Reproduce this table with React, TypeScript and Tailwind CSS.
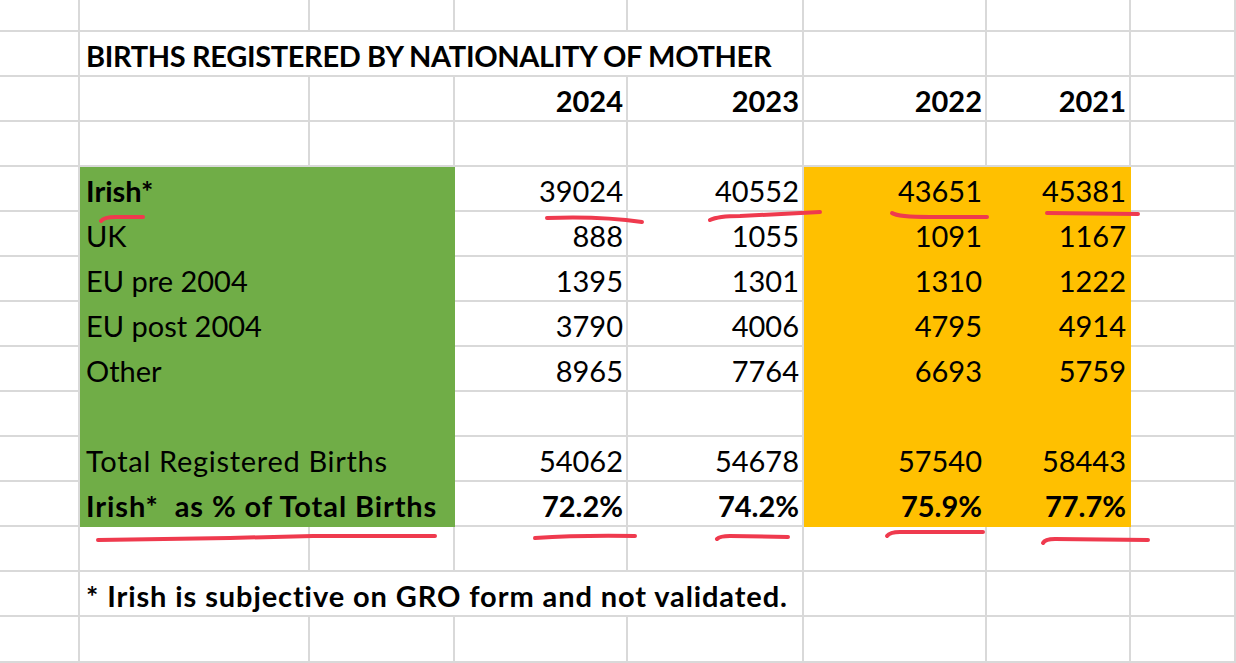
import React from "react";

const GRID = "border-[#d9d9d9]";
const GREEN = "bg-[#70ad47] border-[#70ad47]";
const ORANGE = "bg-[#ffc000] border-[#ffc000]";

type Row = {
  label?: string;
  labelBold?: boolean;
  numBold?: boolean;
  track?: string;
  values?: string[];
};

const rows: Row[] = [
  { label: "Irish*", labelBold: true, values: ["39024", "40552", "43651", "45381"] },
  { label: "UK", values: ["888", "1055", "1091", "1167"] },
  { label: "EU pre 2004", values: ["1395", "1301", "1310", "1222"] },
  { label: "EU post 2004", values: ["3790", "4006", "4795", "4914"] },
  { label: "Other", values: ["8965", "7764", "6693", "5759"] },
  {},
  { label: "Total Registered Births", track: "tracking-[0.7px]", values: ["54062", "54678", "57540", "58443"] },
  {
    label: "Irish*  as % of Total Births",
    labelBold: true,
    numBold: true,
    track: "tracking-[0.9px]",
    values: ["72.2%", "74.2%", "75.9%", "77.7%"],
  },
];

const years = ["2024", "2023", "2022", "2021"];

// plain spreadsheet cell, gridline on right + bottom
const Cell = ({
  className = "",
  tone = GRID,
  children,
}: {
  className?: string;
  tone?: string;
  children?: React.ReactNode;
}) => (
  <div className={`h-[45px] border-r-2 border-b-2 ${tone} flex items-end whitespace-pre pb-[5px] ${className}`}>
    {children}
  </div>
);

const EmptyRow = ({ h = "h-[45px]" }: { h?: string }) => (
  <>
    {Array.from({ length: 8 }).map((_, i) => (
      <div key={i} className={`${h} border-r-2 border-b-2 ${GRID}`} />
    ))}
  </>
);

// red pen marks drawn over the sheet
const PenMarks = () => (
  <svg className="absolute inset-0 pointer-events-none" width="1236" height="663" viewBox="0 0 1236 663">
    <g fill="none" stroke="#ef3a4e" strokeWidth="4" strokeLinecap="round" strokeLinejoin="round">
      <path d="M101 221 Q104 217 116 217 L143 217" />
      <path d="M547 218 Q600 216 642 222" />
      <path d="M710 220 Q718 216 740 216 L820 212" />
      <path d="M892 213 Q898 217 930 217 L987 217" />
      <path d="M1047 213 L1138 214" />
      <path d="M98 540 L230 538 L313 536 L435 536" />
      <path d="M535 538 Q580 535 635 536" />
      <path d="M717 539 Q720 536 730 536 L788 537" />
      <path d="M887 536 Q890 532 900 532 L983 532" />
      <path d="M1043 543 Q1045 539 1055 539 L1148 540" />
    </g>
  </svg>
);

export default function App() {
  return (
    <div className="relative w-[1236px] h-[663px] overflow-hidden bg-white text-black text-[29px] leading-none font-['Lato',sans-serif]">
      <div className="grid grid-cols-[80px_230px_145px_173px_176px_183px_144px_105px]">
        <EmptyRow h="h-[32px]" />

        {/* title */}
        <Cell />
        <Cell className="col-span-4 pl-[6px] font-bold tracking-[-0.35px]">BIRTHS REGISTERED BY NATIONALITY OF MOTHER</Cell>
        <Cell />
        <Cell />
        <Cell />

        {/* years */}
        <Cell />
        <Cell />
        <Cell />
        {years.map((y) => (
          <Cell key={y} className="justify-end pr-[3px] font-bold">
            {y}
          </Cell>
        ))}
        <Cell />

        <EmptyRow />

        {rows.map((r, i) => (
          <React.Fragment key={i}>
            <Cell />
            <Cell tone={GREEN} className={`col-span-2 pl-[6px] ${r.labelBold ? "font-bold" : ""} ${r.track ?? ""}`}>
              {r.label}
            </Cell>
            {[0, 1, 2, 3].map((j) => (
              <Cell
                key={j}
                tone={j >= 2 ? ORANGE : GRID}
                className={`justify-end pr-[3px] ${r.numBold ? "font-bold" : ""}`}
              >
                {r.values?.[j]}
              </Cell>
            ))}
            <Cell />
          </React.Fragment>
        ))}

        <EmptyRow />

        {/* footnote */}
        <Cell />
        <Cell className="col-span-4 pl-[6px] font-bold tracking-[0.9px]">* Irish is subjective on GRO form and not validated.</Cell>
        <Cell />
        <Cell />
        <Cell />

        <EmptyRow h="h-[46px]" />
      </div>
      <PenMarks />
    </div>
  );
}
